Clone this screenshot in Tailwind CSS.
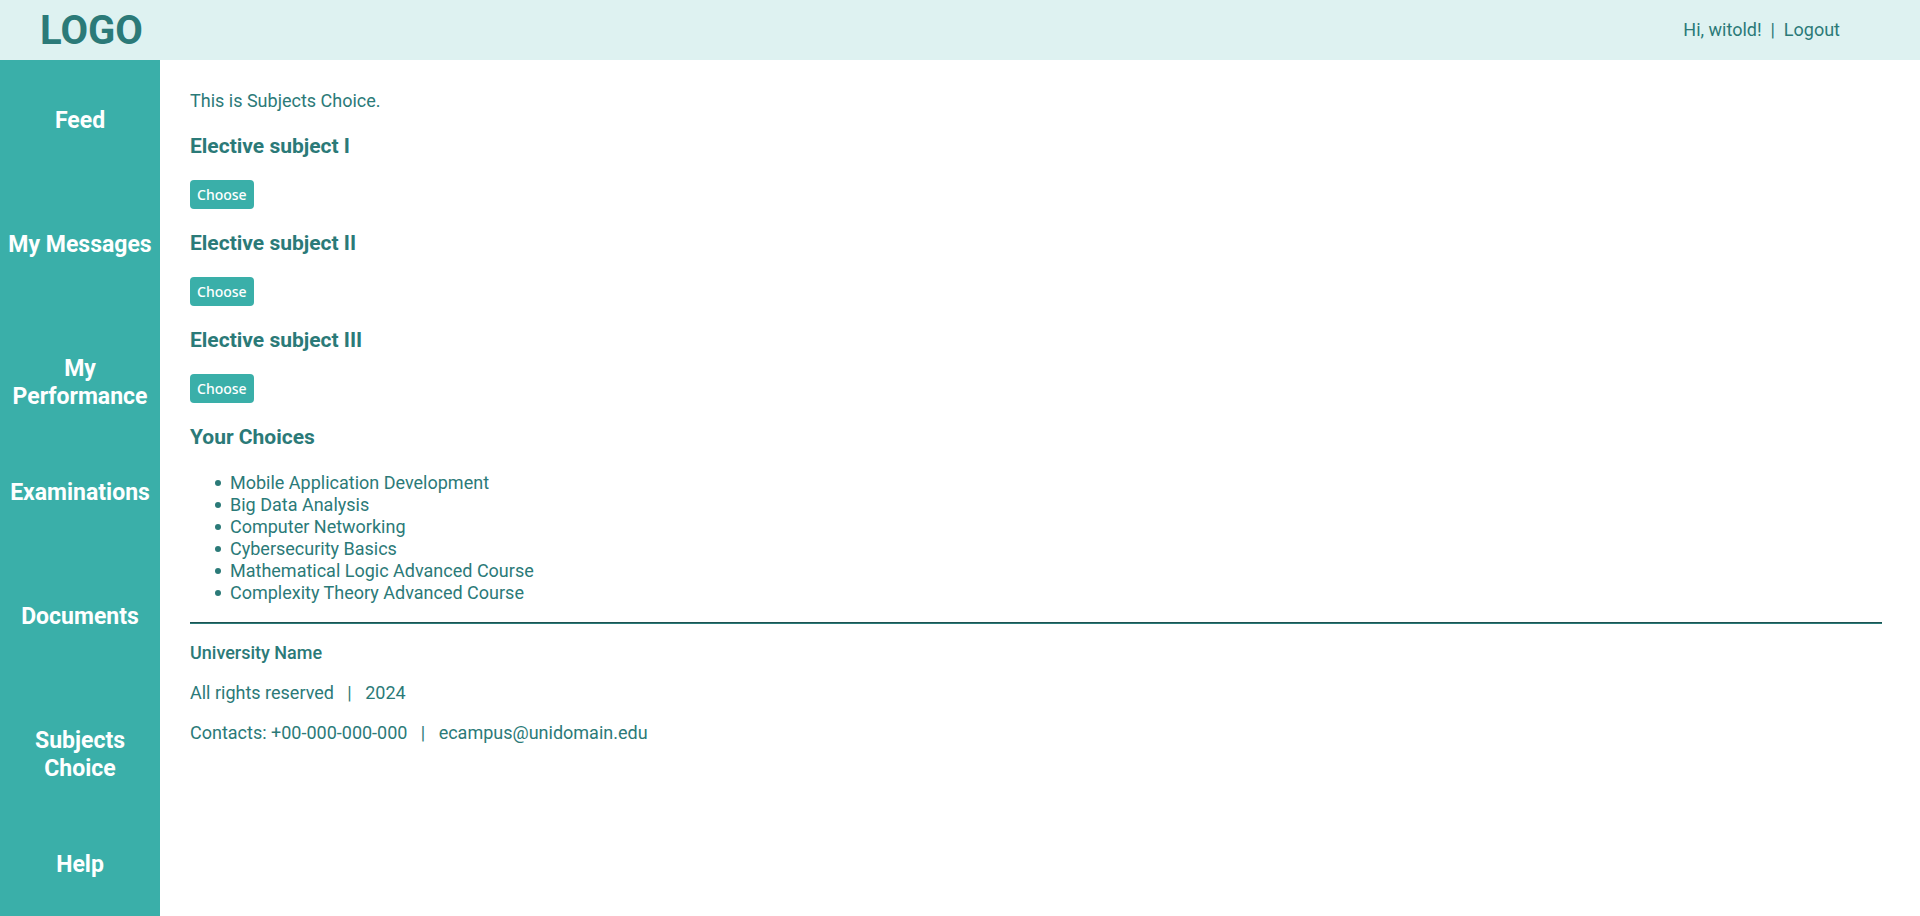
<!DOCTYPE html>
<html lang="en">
<head>
<meta charset="utf-8">
<meta name="viewport" content="width=device-width, initial-scale=1">
<title>Subjects Choice</title>
<script src="https://cdn.jsdelivr.net/npm/@tailwindcss/browser@4"></script>
</head>
<body class="flex min-h-screen flex-col bg-white font-['Roboto',sans-serif] text-[18px] leading-[22px] text-[#2b7a78]">
  <header class="flex h-15 items-center justify-between bg-[#def2f1] pr-20 pl-10">
    <a href="#" class="text-[40px] leading-[47px] font-bold">LOGO</a>
    <div class="whitespace-pre"><span>Hi, witold!</span>  |  <a href="#">Logout</a></div>
  </header>
  <div class="flex grow">
    <nav class="flex w-40 shrink-0 flex-col bg-[#3aafa9] pt-[47px] text-center text-[23px] leading-[28px] font-bold text-[#feffff]">
      <div class="h-[124px]"><a href="#">Feed</a></div>
      <div class="h-[124px]"><a href="#">My Messages</a></div>
      <div class="h-[124px]"><a href="#">My Performance</a></div>
      <div class="h-[124px]"><a href="#">Examinations</a></div>
      <div class="h-[124px]"><a href="#">Documents</a></div>
      <div class="h-[124px]"><a href="#">Subjects Choice</a></div>
      <div><a href="#">Help</a></div>
    </nav>
    <div class="grow pt-[30px] pr-[38px] pl-[30px]">
      <main>
        <p>This is Subjects Choice.</p>
        <section class="mt-[22px]">
          <h2 class="mb-[21px] text-[21px] leading-[25px] font-bold">Elective subject I</h2>
          <button type="button" class="block h-[29px] rounded bg-[#3aafa9] px-[7px] font-['Noto_Sans',sans-serif] text-[14px] leading-5 font-medium text-[#feffff]">Choose</button>
        </section>
        <section class="mt-[22px]">
          <h2 class="mb-[21px] text-[21px] leading-[25px] font-bold">Elective subject II</h2>
          <button type="button" class="block h-[29px] rounded bg-[#3aafa9] px-[7px] font-['Noto_Sans',sans-serif] text-[14px] leading-5 font-medium text-[#feffff]">Choose</button>
        </section>
        <section class="mt-[22px]">
          <h2 class="mb-[21px] text-[21px] leading-[25px] font-bold">Elective subject III</h2>
          <button type="button" class="block h-[29px] rounded bg-[#3aafa9] px-[7px] font-['Noto_Sans',sans-serif] text-[14px] leading-5 font-medium text-[#feffff]">Choose</button>
        </section>
        <section class="mt-[22px]">
          <h2 class="mb-[22px] text-[21px] leading-[25px] font-bold">Your Choices</h2>
          <ul class="pl-[25px]">
            <li class="flex items-center gap-[9px] before:size-1.5 before:rounded-full before:bg-[#2b7a78]">Mobile Application Development</li>
            <li class="flex items-center gap-[9px] before:size-1.5 before:rounded-full before:bg-[#2b7a78]">Big Data Analysis</li>
            <li class="flex items-center gap-[9px] before:size-1.5 before:rounded-full before:bg-[#2b7a78]">Computer Networking</li>
            <li class="flex items-center gap-[9px] before:size-1.5 before:rounded-full before:bg-[#2b7a78]">Cybersecurity Basics</li>
            <li class="flex items-center gap-[9px] before:size-1.5 before:rounded-full before:bg-[#2b7a78]">Mathematical Logic Advanced Course</li>
            <li class="flex items-center gap-[9px] before:size-1.5 before:rounded-full before:bg-[#2b7a78]">Complexity Theory Advanced Course</li>
          </ul>
        </section>
      </main>
      <hr class="my-[18px] border-t border-b border-t-[#1d5352] border-b-[#2b7a78]">
      <footer class="flex flex-col gap-[18px]">
        <p class="font-medium">University Name</p>
        <p class="whitespace-pre">All rights reserved   |   2024</p>
        <p class="whitespace-pre">Contacts: +00-000-000-000   |   ecampus@unidomain.edu</p>
      </footer>
    </div>
  </div>
</body>
</html>
